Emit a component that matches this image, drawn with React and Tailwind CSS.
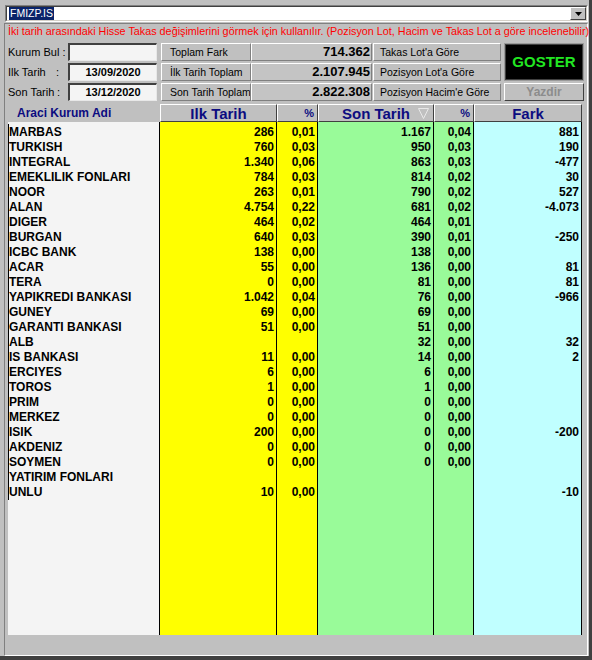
const rows = [
  ["MARBAS", "286", "0,01", "1.167", "0,04", "881"],
  ["TURKISH", "760", "0,03", "950", "0,03", "190"],
  ["INTEGRAL", "1.340", "0,06", "863", "0,03", "-477"],
  ["EMEKLILIK FONLARI", "784", "0,03", "814", "0,02", "30"],
  ["NOOR", "263", "0,01", "790", "0,02", "527"],
  ["ALAN", "4.754", "0,22", "681", "0,02", "-4.073"],
  ["DIGER", "464", "0,02", "464", "0,01", ""],
  ["BURGAN", "640", "0,03", "390", "0,01", "-250"],
  ["ICBC BANK", "138", "0,00", "138", "0,00", ""],
  ["ACAR", "55", "0,00", "136", "0,00", "81"],
  ["TERA", "0", "0,00", "81", "0,00", "81"],
  ["YAPIKREDI BANKASI", "1.042", "0,04", "76", "0,00", "-966"],
  ["GUNEY", "69", "0,00", "69", "0,00", ""],
  ["GARANTI BANKASI", "51", "0,00", "51", "0,00", ""],
  ["ALB", "", "", "32", "0,00", "32"],
  ["IS BANKASI", "11", "0,00", "14", "0,00", "2"],
  ["ERCIYES", "6", "0,00", "6", "0,00", ""],
  ["TOROS", "1", "0,00", "1", "0,00", ""],
  ["PRIM", "0", "0,00", "0", "0,00", ""],
  ["MERKEZ", "0", "0,00", "0", "0,00", ""],
  ["ISIK", "200", "0,00", "0", "0,00", "-200"],
  ["AKDENIZ", "0", "0,00", "0", "0,00", ""],
  ["SOYMEN", "0", "0,00", "0", "0,00", ""],
  ["YATIRIM FONLARI", "", "", "", "", ""],
  ["UNLU", "10", "0,00", "", "", "-10"],
];

const raised =
  "border border-t-white border-l-white border-r-[#808080] border-b-[#808080]";

function Btn({ children }) {
  return (
    <div className={`w-[90px] h-[18px] bg-[#c0c0c0] ${raised} text-[10.5px] leading-[16px] pl-[8px] whitespace-nowrap overflow-hidden`}>
      {children}
    </div>
  );
}

function Input({ children }) {
  return (
    <div className="w-[89px] h-[18px] bg-[#f4f4f4] border-t-2 border-l-2 border-t-[#404040] border-l-[#404040] border-b border-r border-b-[#e8e8e8] border-r-[#e8e8e8] text-[11px] font-bold leading-[15px] text-center">
      {children}
    </div>
  );
}

function Value({ children }) {
  return (
    <div className={`w-[121px] h-[18px] bg-[#c4c4c4] ${raised} text-[13px] font-bold leading-[16px] text-right pr-[1px]`}>
      {children}
    </div>
  );
}

function Btn2({ children }) {
  return (
    <div className={`ml-[1px] w-[128px] h-[18px] bg-[#c0c0c0] ${raised} text-[10.5px] leading-[16px] pl-[6px] whitespace-nowrap`}>
      {children}
    </div>
  );
}

const hdr =
  "h-[18px] bg-[#c0c0c0] border border-t-white border-l-white border-r-[#404040] border-b-[#404040] text-[#0c0c80] font-bold";

function Col({ w, bg, idx, name }) {
  return (
    <div className={`${w} ${bg} border-r border-r-black flex flex-col`}>
      <div className={`mt-[2px] pt-[1px] ${name ? "border-l border-l-black" : ""}`}>
        {rows.map((r, i) => (
          <div
            key={i}
            className={`h-[15px] leading-[15px] text-[12px] font-bold whitespace-nowrap ${name ? "text-left" : "text-right pr-[2px]"}`}
          >
            {r[idx]}
          </div>
        ))}
      </div>
    </div>
  );
}

export default function App() {
  return (
    <div className="w-[592px] h-[660px] bg-[#c0c0c0] font-['Liberation_Sans',Arial,sans-serif] text-black border-r-[3px] border-b-[4px] border-r-[#404040] border-b-[#404040] flex flex-col overflow-hidden">
      {/* combobox */}
      <div className="pt-[5px] pl-[5px]">
        <div className="w-[583px] h-[17px] border border-t-[#808080] border-l-[#808080] border-b-white border-r-white">
          <div className="h-full bg-white border border-t-[#404040] border-l-[#404040] border-b-[#d4d0c8] border-r-[#d4d0c8] flex items-center">
            <span className="ml-[2px] bg-[#0a246a] text-white text-[10.5px] leading-[13px] px-[1px]">FMIZP.IS</span>
            <div className="ml-auto w-[16px] h-[13px] bg-[#c0c0c0] border border-t-white border-l-white border-r-[#404040] border-b-[#404040] flex items-center justify-center">
              <svg width="7" height="4" viewBox="0 0 7 4">
                <polygon points="0,0 7,0 3.5,4" fill="#000" />
              </svg>
            </div>
          </div>
        </div>
      </div>

      {/* main panel */}
      <div className="mt-[1px] ml-[4px] w-[584px] flex-1 border border-t-[#808080] border-l-[#808080] border-b-white border-r-white flex flex-col pl-[3px]">
        <div className="h-[14px] leading-[14px] text-[10.8px] text-[#ff0000] whitespace-nowrap">
          İki tarih arasındaki Hisse Takas değişimlerini görmek için kullanılır. (Pozisyon Lot, Hacim ve Takas Lot a göre incelenebilir)
        </div>

        {/* controls */}
        <div className="mt-[5px] flex">
          <div className="flex flex-col gap-[2px]">
            <div className="flex h-[18px]">
              <div className="w-[60px] text-[11px] leading-[18px]">Kurum Bul :</div>
              <Input></Input>
              <div className="ml-[4px]"><Btn>Toplam Fark</Btn></div>
              <Value>714.362</Value>
              <Btn2>Takas Lot'a Göre</Btn2>
            </div>
            <div className="flex h-[18px]">
              <div className="w-[60px] text-[11px] leading-[18px] flex pr-[9px] justify-between"><span>Ilk Tarih</span><span>:</span></div>
              <Input>13/09/2020</Input>
              <div className="ml-[4px]"><Btn>İlk Tarih Toplam</Btn></div>
              <Value>2.107.945</Value>
              <Btn2>Pozisyon Lot'a Göre</Btn2>
            </div>
            <div className="flex h-[18px]">
              <div className="w-[60px] text-[11px] leading-[18px] flex pr-[8px] justify-between"><span>Son Tarih</span><span>:</span></div>
              <Input>13/12/2020</Input>
              <div className="ml-[4px]"><Btn>Son Tarih Toplam</Btn></div>
              <Value>2.822.308</Value>
              <Btn2>Pozisyon Hacim'e Göre</Btn2>
            </div>
          </div>
          <div className="ml-[3px] w-[80px] flex flex-col gap-[2px]">
            <div className="h-[38px] bg-black border border-[#9a9a9a] outline outline-1 outline-[#404040] -outline-offset-2 flex items-center justify-center text-[15px] font-bold text-[#22e622]">
              GOSTER
            </div>
            <div className="h-[18px] bg-[#c0c0c0] border border-t-white border-l-white border-r-[#404040] border-b-[#404040] text-[12px] font-bold text-[#8c8c8c] leading-[16px] text-center">
              Yazdir
            </div>
          </div>
        </div>

        {/* table */}
        <div className="mt-[3px] flex flex-col">
          <div className="flex">
            <div className="w-[152px] h-[18px] text-[12px] font-bold text-[#0c0c80] leading-[19px] pl-[9px]">Araci Kurum Adi</div>
            <div className={`w-[117px] ${hdr} text-[15px] leading-[17px] text-center`}>Ilk Tarih</div>
            <div className={`w-[41px] ${hdr} text-[11px] leading-[16px] text-right pr-[3px]`}>%</div>
            <div className={`w-[116px] ${hdr} text-[15px] leading-[17px] text-center relative`}>
              Son Tarih
              <svg className="absolute right-[4px] top-[3px]" width="11" height="11" viewBox="0 0 11 11">
                <polygon points="0.5,0.5 10.5,0.5 5.5,10.5" fill="none" stroke="#e8e8e8" strokeWidth="1" />
              </svg>
            </div>
            <div className={`w-[40px] ${hdr} text-[11px] leading-[16px] text-right pr-[3px]`}>%</div>
            <div className={`w-[108px] ${hdr} text-[15px] leading-[17px] text-center`}>Fark</div>
          </div>
          <div className="h-[513px] flex">
            <Col w="w-[152px]" bg="bg-[#f4f4f4]" idx={0} name />
            <Col w="w-[117px]" bg="bg-[#ffff00]" idx={1} />
            <Col w="w-[41px]" bg="bg-[#ffff00]" idx={2} />
            <Col w="w-[116px]" bg="bg-[#99fb99]" idx={3} />
            <Col w="w-[40px]" bg="bg-[#99fb99]" idx={4} />
            <Col w="w-[108px]" bg="bg-[#c0ffff]" idx={5} />
          </div>
        </div>
      </div>
    </div>
  );
}
